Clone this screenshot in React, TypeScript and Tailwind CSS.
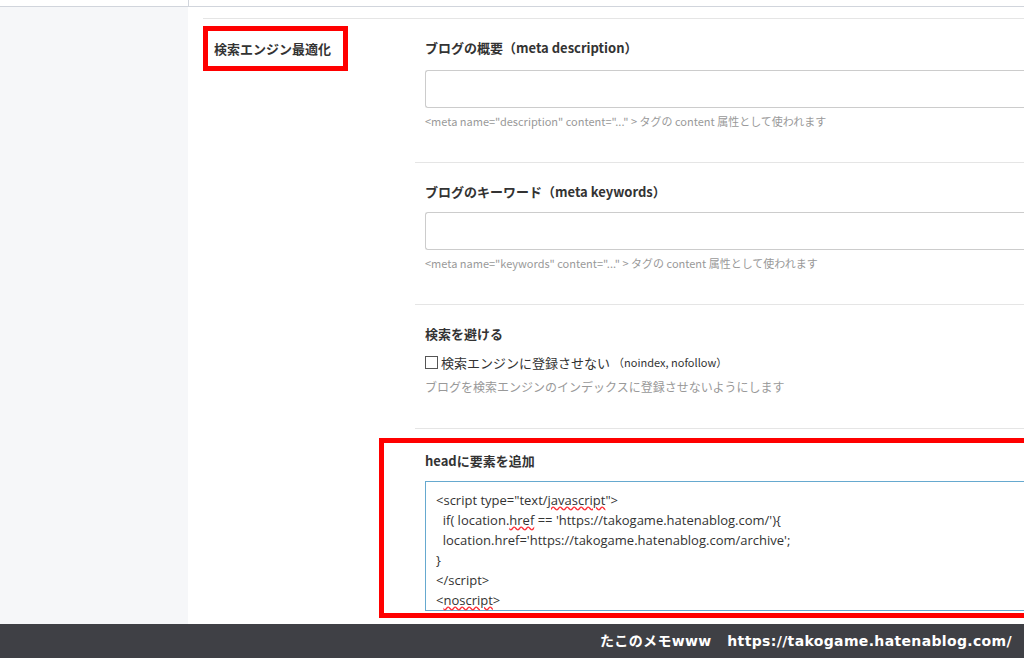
export default function App() {
  const font = { fontFamily: '"Noto Sans CJK JP", "Noto Sans", sans-serif' };
  return (
    <div className="w-[1024px] h-[658px] overflow-hidden relative bg-white" style={font}>
      <div className="h-[7px] border-b border-gray-300 bg-white flex">
        <div className="w-[188px]" />
        <div className="flex-1 border-l border-gray-300" />
      </div>
      <div className="flex h-[651px]">
        <div className="w-[188px] bg-[#f6f7f9]" />
        <div className="flex-1 pl-[15px]">
          <div className="h-[12px] border-b border-[#e5e5e5]" />
          <div className="flex">
            <div className="w-[212px] pt-[7px]">
              <div className="w-[145px] h-[45px] border-[5px] border-[#ff0000] flex items-center pl-[6px] text-[13px] font-bold text-[#333]">
                検索エンジン最適化
              </div>
            </div>
            <div className="flex-1">
              <div className="pl-[10px] pt-[17px] pb-[32px] border-b border-[#e5e5e5]">
                <div className="text-[13px] font-bold text-[#333] h-[20px] mt-[2px]">ブログの概要（meta description）</div>
                <div className="mt-[12px] h-[38px] border border-[#ccc] rounded-l-[3px] border-r-0" />
                <div className="mt-[5px] text-[11px] text-[#999]">&lt;meta name="description" content="..." &gt; タグの content 属性として使われます</div>
              </div>
              <div className="pl-[10px] pt-[19px] pb-[33px] border-b border-[#e5e5e5]">
                <div className="text-[13px] font-bold text-[#333] h-[20px]">ブログのキーワード（meta keywords）</div>
                <div className="mt-[10px] h-[38px] border border-[#ccc] rounded-l-[3px] border-r-0" />
                <div className="mt-[5px] text-[11px] text-[#999]">&lt;meta name="keywords" content="..." &gt; タグの content 属性として使われます</div>
              </div>
              <div className="pl-[10px] pt-[19px] pb-[32px] border-b border-[#e5e5e5]">
                <div className="text-[13px] font-bold text-[#333]">検索を避ける</div>
                <div className="mt-[9px] flex items-center gap-[3px] text-[13px] text-[#333]">
                  <span className="w-[13px] h-[13px] border border-[#555] bg-white inline-block" />
                  検索エンジンに登録させない<span className="text-[11px]">（noindex, nofollow）</span>
                </div>
                <div className="mt-[6px] text-[12px] text-[#999]">ブログを検索エンジンのインデックスに登録させないようにします</div>
              </div>
              <div className="ml-[-36px] mt-[9px] border-[5px] border-[#ff0000] border-r-0 h-[180px] pl-[41px] pt-[8px] overflow-hidden">
                <div className="text-[13px] font-bold text-[#333]">headに要素を追加</div>
                <div className="mt-[10px] border border-[#66a9cf] border-r-0 pl-[10px] pt-[8px] text-[13px] leading-[20px] text-[#333]" style={{ fontFamily: '"Open Sans", "Noto Sans CJK JP", sans-serif' }}>
                  <div>&lt;script type="text/<span className="underline decoration-wavy decoration-red-500">javascript</span>"&gt;</div>
                  <div>&nbsp;&nbsp;if( location.<span className="underline decoration-wavy decoration-red-500">href</span> == 'https://takogame.hatenablog.com/'){"{"}</div>
                  <div>&nbsp;&nbsp;location.href='https://takogame.hatenablog.com/archive';</div>
                  <div>{"}"}</div>
                  <div>&lt;/script&gt;</div>
                  <div>&lt;<span className="underline decoration-wavy decoration-red-500">noscript</span>&gt;</div>
                </div>
              </div>
            </div>
          </div>
        </div>
      </div>
      <div className="absolute left-0 right-0 bottom-0 h-[34px] bg-[#3f4045] flex items-center justify-end pr-[12px] text-white font-bold text-[14px] tracking-wide" style={{ fontFamily: '"DejaVu Sans", "Noto Sans CJK JP", sans-serif' }}>
        たこのメモwww&nbsp;&nbsp;&nbsp;https://takogame.hatenablog.com/
      </div>
    </div>
  );
}
